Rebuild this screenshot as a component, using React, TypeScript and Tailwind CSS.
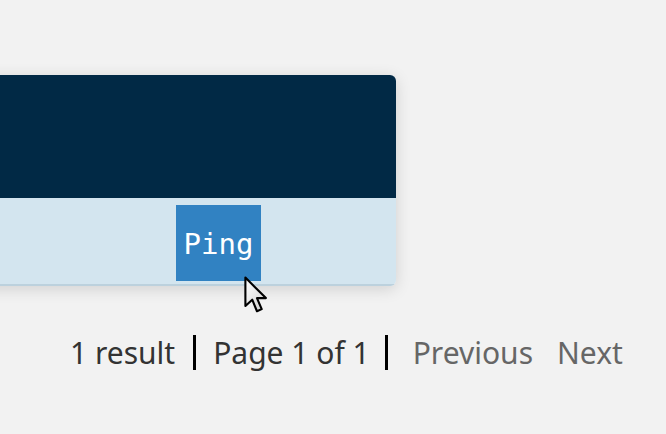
const Cursor = () => (
  <svg
    className="absolute left-[243px] top-[276px]"
    width="29"
    height="40"
    viewBox="0 0 26 38"
  >
    <defs>
      <linearGradient id="cur" x1="0" y1="0" x2="1" y2="1">
        <stop offset="0" stopColor="#ffffff" />
        <stop offset="1" stopColor="#cfcfcf" />
      </linearGradient>
    </defs>
    <path
      d="M1.5 1.5 L1.5 28.5 L8 22.5 L12.5 33.5 L17 31.5 L12.5 21 L21 21 Z"
      fill="url(#cur)"
      stroke="#000"
      strokeWidth="2"
      strokeLinejoin="round"
    />
  </svg>
);

const App = () => {
  return (
    <div className="relative w-[666px] h-[434px] overflow-hidden bg-[#f2f2f2] font-['Noto_Sans',sans-serif]">
      <div className="pt-[75px]">
        <div className="ml-[-104px] w-[500px] rounded-md overflow-hidden shadow-[0_3px_16px_rgba(0,0,0,0.14)]">
          <div className="h-[123px] bg-[#012945]" />
          <div className="h-[88px] bg-[#d3e5ef] border-b-2 border-[#bcd1dd] flex justify-end pr-[135px] pt-[7px]">
            <button className="w-[85px] h-[76px] bg-[#3182c2] text-white text-[29px] font-['DejaVu_Sans_Mono',monospace] leading-none pt-[2px]">
              Ping
            </button>
          </div>
        </div>
      </div>
      <div className="flex items-center pl-[70px] mt-[49px] text-[30px] leading-none">
        <span className="text-[#333]">1 result</span>
        <span className="ml-[18px] mr-[17px] w-[3px] h-[35px] bg-black" />
        <span className="text-[#333]">Page 1 of 1</span>
        <span className="ml-[15px] mr-[17px] w-[3px] h-[35px] bg-black" />
        <span className="text-[#666] ml-[8px]">Previous</span>
        <span className="text-[#666] ml-[24px]">Next</span>
      </div>
      <Cursor />
    </div>
  );
};

export default App;
